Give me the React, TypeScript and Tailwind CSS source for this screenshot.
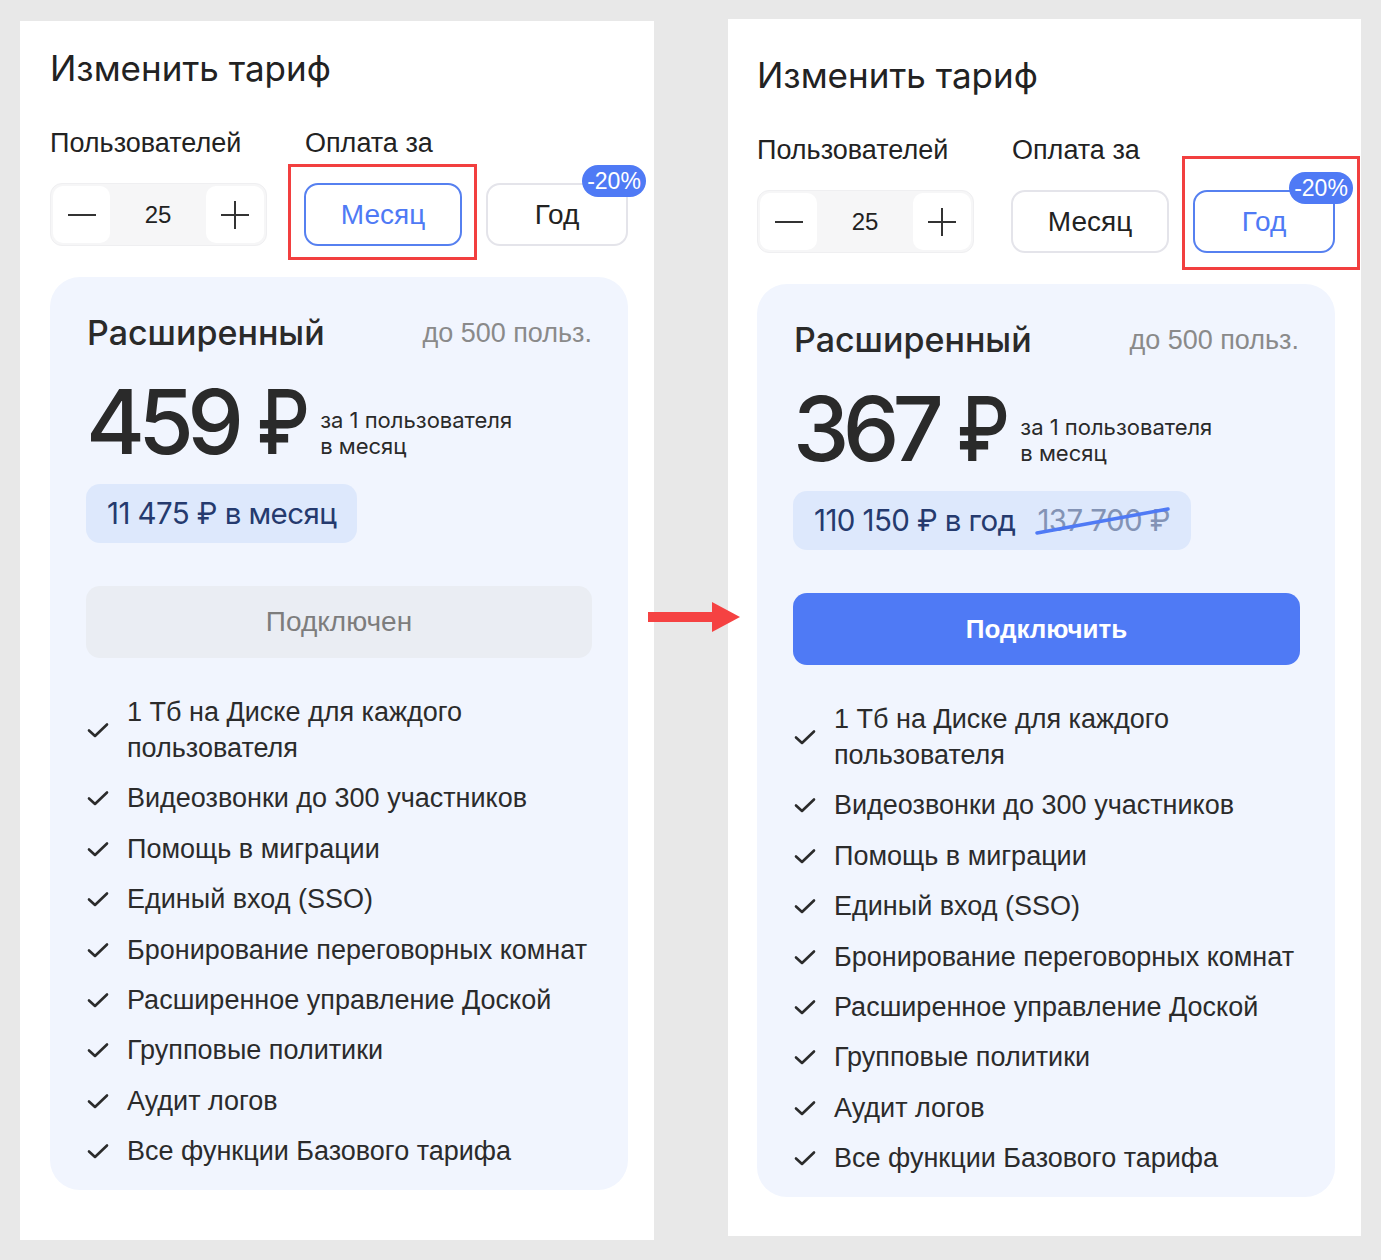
const features = [
  "1 Тб на Диске для каждого пользователя",
  "Видеозвонки до 300 участников",
  "Помощь в миграции",
  "Единый вход (SSO)",
  "Бронирование переговорных комнат",
  "Расширенное управление Доской",
  "Групповые политики",
  "Аудит логов",
  "Все функции Базового тарифа",
];

const sans = "font-['Liberation_Sans',Arial,sans-serif]";
const geo = "font-['Inter',sans-serif]";

function Check() {
  return (
    <svg width="22" height="16" viewBox="0 0 22 16" className="shrink-0">
      <path d="M2 8.5 L8 14 L20 2.5" fill="none" stroke="#2b2b2b" strokeWidth="2.6" strokeLinecap="round" strokeLinejoin="round" />
    </svg>
  );
}

function Stepper() {
  return (
    <div className="flex h-[63px] w-[217px] items-center justify-between rounded-[12px] border border-[#efeff1] bg-[#f6f6f7] p-[2px]">
      <div className="flex h-[57px] w-[57px] items-center justify-center rounded-[10px] bg-white">
        <span className="block h-[2px] w-[28px] bg-[#333]" />
      </div>
      <span className={`${sans} text-[24px] text-[#222]`}>25</span>
      <div className="relative flex h-[57px] w-[58px] items-center justify-center rounded-[10px] bg-white">
        <span className="absolute block h-[2px] w-[28px] bg-[#333]" />
        <span className="absolute block h-[28px] w-[2px] bg-[#333]" />
      </div>
    </div>
  );
}

function Panel({ yearly }: { yearly: boolean }) {
  return (
    <div
      className={
        yearly
          ? "mt-[19px] ml-[74px] h-[1217px] w-[633px] bg-white pl-[29px] pt-[36px]"
          : "mt-[21px] ml-[20px] h-[1219px] w-[634px] bg-white pl-[30px] pt-[27px]"
      }
    >
      <h1 className={`${geo} text-[35px] leading-[40px] text-[#222]`}>Изменить тариф</h1>

      <div className={`${sans} mt-[39px] flex text-[27px] leading-[32px] text-[#222]`}>
        <span className="w-[255px]">Пользователей</span>
        <span>Оплата за</span>
      </div>

      <div className="mt-[24px] flex items-center">
        <Stepper />
        <button
          type="button"
          className={`${sans} ml-[37px] h-[63px] w-[158px] rounded-[14px] border-2 text-[28px] ${
            yearly ? "border-[#e4e4ea] text-[#222]" : "border-[#5680f0] text-[#4f7af5]"
          }`}
        >
          Месяц
        </button>
        <div className="relative ml-[24px]">
          <button
            type="button"
            className={`${sans} h-[63px] w-[142px] rounded-[14px] border-2 text-[28px] ${
              yearly ? "border-[#5680f0] text-[#4f7af5]" : "border-[#e4e4ea] text-[#222]"
            }`}
          >
            Год
          </button>
          <span
            className={`${sans} absolute -right-[18px] -top-[18px] flex h-[32px] w-[64px] items-center justify-center rounded-full bg-[#4f7af5] text-[23px] text-white`}
          >
            -20%
          </span>
        </div>
      </div>

      <div className="mt-[31px] w-[578px] rounded-[30px] bg-[#f1f5fe] px-[36px] pt-[36px] pb-[21px]">
        <div className="flex items-center justify-between pl-px">
          <span className={`${geo} text-[34px] font-medium leading-[40px] text-[#2a2a2a]`}>Расширенный</span>
          <span className={`${sans} text-[27px] leading-[40px] text-[#8a8a8a]`}>до 500 польз.</span>
        </div>

        <div className="mt-[23px] flex items-start">
          <span className={`${geo} text-[90px] font-medium leading-[92px] tracking-[-0.075em] text-[#2a2a2a]`}>
            {yearly ? "367" : "459"}
          </span>
          <span
            className={`${geo} ml-[20px] inline-block w-[48px] origin-left scale-x-[0.82] text-[90px] font-medium leading-[92px] text-[#2a2a2a]`}
          >
            ₽
          </span>
          <div className={`${geo} ml-[15px] mt-[31px] text-[22px] leading-[26px] text-[#2a2a2a]`}>
            <div>за 1 пользователя</div>
            <div>в месяц</div>
          </div>
        </div>

        <div
          className={`${geo} mt-[16px] inline-flex h-[59px] items-center rounded-[14px] bg-[#dde8fc] px-[21px] text-[29.5px] tracking-[-0.02em] text-[#253a6e]`}
        >
          {yearly ? (
            <>
              <span>110 150 ₽ в год</span>
              <span className="relative ml-[22px] text-[#8393b5]">
                137 700 ₽
                <svg className="absolute -left-[2px] top-[8px]" width="136" height="30" viewBox="0 0 136 30">
                  <path d="M2 27 L133 3" stroke="#4f7af5" strokeWidth="3.5" strokeLinecap="round" />
                </svg>
              </span>
            </>
          ) : (
            <span>11 475 ₽ в месяц</span>
          )}
        </div>

        {yearly ? (
          <button
            type="button"
            className={`${sans} mt-[43px] flex h-[72px] w-[507px] items-center justify-center rounded-[14px] bg-[#4f7af5] text-[26px] font-bold text-white`}
          >
            Подключить
          </button>
        ) : (
          <button
            type="button"
            className={`${sans} mt-[43px] flex h-[72px] w-[506px] items-center justify-center rounded-[14px] bg-[#eaedf3] text-[28px] text-[#7d7d7d]`}
          >
            Подключен
          </button>
        )}

        <ul className={`${sans} mt-[36px] flex flex-col gap-[14.4px] text-[27px] leading-[36px] text-[#2b2b2b]`}>
          {features.map((f, i) => (
            <li key={f} className="flex items-center gap-[18px] pl-px">
              <Check />
              <span className={i === 0 ? "w-[370px]" : ""}>{f}</span>
            </li>
          ))}
        </ul>
      </div>
    </div>
  );
}

export default function App() {
  return (
    <div className="relative flex h-[1260px] w-[1381px] items-start bg-[#e8e8e8]">
      <Panel yearly={false} />
      <Panel yearly={true} />

      {/* highlights */}
      <div className="pointer-events-none absolute left-[288px] top-[164px] h-[96px] w-[189px] border-[3px] border-[#f23f3f]" />
      <div className="pointer-events-none absolute left-[1182px] top-[156px] h-[114px] w-[178px] border-[3px] border-[#f23f3f]" />

      <svg className="absolute left-[648px] top-[602px]" width="92" height="30" viewBox="0 0 92 30">
        <rect x="0" y="10" width="65" height="10" fill="#f54242" />
        <path d="M64 0 L92 15 L64 30 Z" fill="#f54242" />
      </svg>
    </div>
  );
}
